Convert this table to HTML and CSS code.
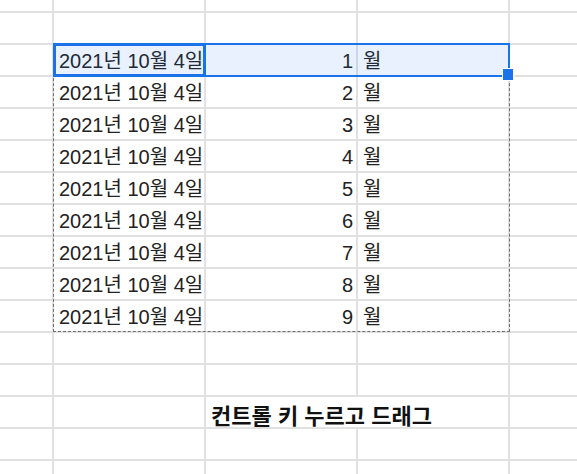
FILE: index.html
```html
<!DOCTYPE html>
<html lang="ko">
<head>
<meta charset="utf-8">
<title>Sheet</title>
<link rel="stylesheet" href="styles.css">
</head>
<body>
<div class="sheet">
  <div class="c"></div><div class="c"></div><div class="c"></div><div class="c"></div><div class="c"></div>
  <div class="c"></div><div class="c"></div><div class="c"></div><div class="c"></div><div class="c"></div>

  <div class="c"></div><div class="c t">2021년 10월 4일</div><div class="c t num">1</div><div class="c t">월</div><div class="c"></div>
  <div class="c"></div><div class="c t">2021년 10월 4일</div><div class="c t num">2</div><div class="c t">월</div><div class="c"></div>
  <div class="c"></div><div class="c t">2021년 10월 4일</div><div class="c t num">3</div><div class="c t">월</div><div class="c"></div>
  <div class="c"></div><div class="c t">2021년 10월 4일</div><div class="c t num">4</div><div class="c t">월</div><div class="c"></div>
  <div class="c"></div><div class="c t">2021년 10월 4일</div><div class="c t num">5</div><div class="c t">월</div><div class="c"></div>
  <div class="c"></div><div class="c t">2021년 10월 4일</div><div class="c t num">6</div><div class="c t">월</div><div class="c"></div>
  <div class="c"></div><div class="c t">2021년 10월 4일</div><div class="c t num">7</div><div class="c t">월</div><div class="c"></div>
  <div class="c"></div><div class="c t">2021년 10월 4일</div><div class="c t num">8</div><div class="c t">월</div><div class="c"></div>
  <div class="c"></div><div class="c t">2021년 10월 4일</div><div class="c t num">9</div><div class="c t">월</div><div class="c"></div>

  <div class="c"></div><div class="c"></div><div class="c"></div><div class="c"></div><div class="c"></div>
  <div class="c"></div><div class="c"></div><div class="c"></div><div class="c"></div><div class="c"></div>
  <div class="c"></div><div class="c"></div><div class="c t bold span2">컨트롤 키 누르고 드래그</div><div class="c"></div>
  <div class="c"></div><div class="c"></div><div class="c"></div><div class="c"></div><div class="c"></div>
  <div class="c"></div><div class="c"></div><div class="c"></div><div class="c"></div><div class="c"></div>

  <div class="copy-range"></div>
  <div class="sel-range"></div>
  <div class="active-cell"></div>
  <div class="fill-handle"></div>
</div>
</body>
</html>
```
FILE: styles.css
```css
html, body {
  margin: 0;
  padding: 0;
  background: #ffffff;
}

.sheet {
  position: relative;
  width: 577px;
  height: 474px;
  display: grid;
  grid-template-columns: 52px 150px 150px 150px 67px;
  grid-template-rows: 11px repeat(14, 30px) 13px;
  gap: 2px;
  background: #e1e1e1;
  overflow: hidden;
  font-family: "Liberation Sans", Arial, "Noto Sans CJK KR", sans-serif;
  font-size: 20px;
  color: #222222;
}

.c {
  background: #ffffff;
  min-width: 0;
  overflow: hidden;
  white-space: nowrap;
}

.t {
  display: flex;
  align-items: flex-end;
  padding: 0 4px 2px 5px;
  line-height: 24px;
}

.num {
  justify-content: flex-end;
  padding-right: 3px;
}

.bold {
  font-family: "Noto Sans CJK KR", sans-serif;
  font-size: 22px;
  font-weight: 700;
  color: #111111;
  padding-bottom: 1px;
}

.span2 {
  grid-column: span 2;
}

.copy-range {
  position: absolute;
  left: 53px;
  top: 43px;
  width: 457px;
  height: 289px;
  box-sizing: border-box;
  border: 1px dashed #6f6f6f;
}

.sel-range {
  position: absolute;
  left: 53px;
  top: 43px;
  width: 457px;
  height: 34px;
  box-sizing: border-box;
  border: 2px solid #1a73e8;
  background: rgba(26, 115, 232, 0.1);
}

.active-cell {
  position: absolute;
  left: 53px;
  top: 43px;
  width: 153px;
  height: 34px;
  box-sizing: border-box;
  border: 3px solid #1a73e8;
}

.fill-handle {
  position: absolute;
  left: 503px;
  top: 69px;
  width: 10px;
  height: 11px;
  background: #1a73e8;
  box-shadow: 0 0 0 1px #ffffff;
}
```
